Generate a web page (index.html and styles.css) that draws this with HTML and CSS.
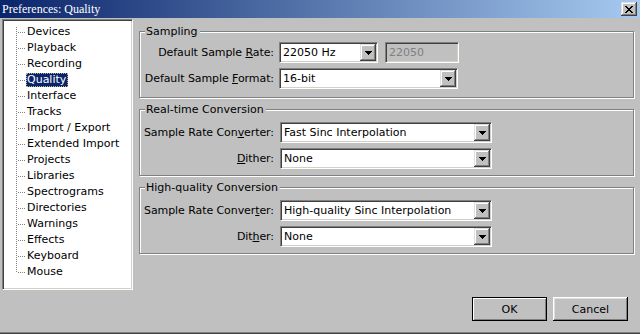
FILE: index.html
```html
<!DOCTYPE html>
<html>
<head>
<meta charset="utf-8">
<title>Preferences: Quality</title>
<link rel="stylesheet" href="styles.css">
</head>
<body>
<div class="window">
  <div class="titlebar">
    <span class="title">Preferences: Quality</span>
    <span class="close"><svg width="8" height="7" viewBox="0 0 8 7" shape-rendering="crispEdges"><path d="M0 0h2v1H0zM6 0h2v1H6zM1 1h2v1H1zM5 1h2v1H5zM2 2h4v1H2zM3 3h2v1H3zM2 4h4v1H2zM1 5h2v1H1zM5 5h2v1H5zM0 6h2v1H0zM6 6h2v1H6z" fill="#000"/></svg></span>
  </div>
  <div class="content">
    <div class="main">
      <div class="tree">
        <ul class="tree-list">
          <li>Devices</li>
          <li>Playback</li>
          <li>Recording</li>
          <li><span class="sel">Quality</span></li>
          <li>Interface</li>
          <li>Tracks</li>
          <li>Import / Export</li>
          <li>Extended Import</li>
          <li>Projects</li>
          <li>Libraries</li>
          <li>Spectrograms</li>
          <li>Directories</li>
          <li>Warnings</li>
          <li>Effects</li>
          <li>Keyboard</li>
          <li>Mouse</li>
        </ul>
      </div>
      <div class="panels">
        <div class="group g-sampling">
          <span class="legend">Sampling</span>
          <div class="row">
            <span class="label">Default Sample <u>R</u>ate:</span>
            <div class="combo w-rate"><span class="val">22050 Hz</span><span class="drop"><svg width="7" height="4" viewBox="0 0 7 4" shape-rendering="crispEdges"><path d="M0 0h7v1H0zM1 1h5v1H1zM2 2h3v1H2zM3 3h1v1H3z" fill="#000"/></svg></span></div>
            <div class="field disabled">22050</div>
          </div>
          <div class="row">
            <span class="label">Default Sample <u>F</u>ormat:</span>
            <div class="combo w-format"><span class="val">16-bit</span><span class="drop"><svg width="7" height="4" viewBox="0 0 7 4" shape-rendering="crispEdges"><path d="M0 0h7v1H0zM1 1h5v1H1zM2 2h3v1H2zM3 3h1v1H3z" fill="#000"/></svg></span></div>
          </div>
        </div>
        <div class="group g-conv">
          <span class="legend">Real-time Conversion</span>
          <div class="row">
            <span class="label">Sample Rate Con<u>v</u>erter:</span>
            <div class="combo w-conv"><span class="val">Fast Sinc Interpolation</span><span class="drop"><svg width="7" height="4" viewBox="0 0 7 4" shape-rendering="crispEdges"><path d="M0 0h7v1H0zM1 1h5v1H1zM2 2h3v1H2zM3 3h1v1H3z" fill="#000"/></svg></span></div>
          </div>
          <div class="row">
            <span class="label"><u>D</u>ither:</span>
            <div class="combo w-conv"><span class="val">None</span><span class="drop"><svg width="7" height="4" viewBox="0 0 7 4" shape-rendering="crispEdges"><path d="M0 0h7v1H0zM1 1h5v1H1zM2 2h3v1H2zM3 3h1v1H3z" fill="#000"/></svg></span></div>
          </div>
        </div>
        <div class="group g-conv">
          <span class="legend">High-quality Conversion</span>
          <div class="row">
            <span class="label">Sample Rate Conver<u>t</u>er:</span>
            <div class="combo w-conv"><span class="val">High-quality Sinc Interpolation</span><span class="drop"><svg width="7" height="4" viewBox="0 0 7 4" shape-rendering="crispEdges"><path d="M0 0h7v1H0zM1 1h5v1H1zM2 2h3v1H2zM3 3h1v1H3z" fill="#000"/></svg></span></div>
          </div>
          <div class="row">
            <span class="label">Dit<u>h</u>er:</span>
            <div class="combo w-conv"><span class="val">None</span><span class="drop"><svg width="7" height="4" viewBox="0 0 7 4" shape-rendering="crispEdges"><path d="M0 0h7v1H0zM1 1h5v1H1zM2 2h3v1H2zM3 3h1v1H3z" fill="#000"/></svg></span></div>
          </div>
        </div>
      </div>
    </div>
    <div class="buttons">
      <button class="btn btn-default">OK</button>
      <button class="btn">Cancel</button>
    </div>
  </div>
</div>
</body>
</html>
```
FILE: styles.css
```css
* { box-sizing: border-box; margin: 0; padding: 0; }
html, body { width: 640px; height: 334px; overflow: hidden; }
body {
  background: #c0c0c0;
  font-family: "DejaVu Sans", Tahoma, sans-serif;
  font-size: 11px;
  color: #000;
}
.window {
  width: 640px;
  height: 334px;
  display: flex;
  flex-direction: column;
  box-shadow: inset 0 -1px 0 #404040, inset 0 -2px 0 #808080;
}
.titlebar {
  height: 18px;
  display: flex;
  align-items: center;
  padding: 0 3px 0 2px;
  background: linear-gradient(to right, #0a246a, #a6caf0);
}
.title {
  flex: 1;
  color: #fff;
  font-family: "Liberation Serif", serif;
  font-size: 12px;
  white-space: nowrap;
}
.close {
  width: 16px;
  height: 14px;
  display: flex;
  align-items: center;
  justify-content: center;
  background: #c0c0c0;
  box-shadow: inset -1px -1px 0 #404040, inset 1px 1px 0 #dfdfdf, inset -2px -2px 0 #808080, inset 2px 2px 0 #fff;
}
.content {
  flex: 1;
  display: flex;
  flex-direction: column;
}
.main {
  display: flex;
  margin-top: 1px;
  padding-left: 2px;
  gap: 6px;
}
.tree {
  width: 131px;
  height: 271px;
  background: #fff;
  border: 1px solid;
  border-color: #808080 #fff #fff #808080;
  box-shadow: inset 1px 1px 0 #404040, inset -1px -1px 0 #d4d0c8;
  padding-top: 4px;
  padding-left: 2px;
}
.tree-list {
  list-style: none;
  position: relative;
}
.tree-list::before {
  content: "";
  position: absolute;
  left: 11px;
  top: 3px;
  bottom: 7px;
  width: 1px;
  background: repeating-linear-gradient(to bottom, #808080 0 1px, transparent 1px 2px);
}
.tree-list li {
  position: relative;
  height: 16px;
  line-height: 16px;
  padding-left: 22px;
  white-space: nowrap;
}
.tree-list li::before {
  content: "";
  position: absolute;
  left: 12px;
  top: 8px;
  width: 9px;
  height: 1px;
  background: repeating-linear-gradient(to right, transparent 0 1px, #808080 1px 2px);
}
.sel {
  display: inline-block;
  height: 14px;
  line-height: 13px;
  margin-left: -1px;
  padding: 0 2px 0 1px;
  background: #0a246a;
  color: #fff;
  outline: 1px dotted #b8b890;
  outline-offset: -1px;
  vertical-align: top;
  margin-top: 1px;
}
.panels {
  flex: 1;
  margin-top: 12px;
  margin-right: 6px;
  display: flex;
  flex-direction: column;
  gap: 11px;
}
.group {
  position: relative;
  height: 67px;
  border: 1px solid #808080;
  box-shadow: 1px 1px 0 #fff, inset 1px 1px 0 #fff;
  display: flex;
  flex-direction: column;
  gap: 5px;
}
.g-sampling { padding-top: 10px; }
.g-conv { padding-top: 12px; }
.legend {
  position: absolute;
  left: 5px;
  top: -7px;
  line-height: 13px;
  padding: 0 2px 0 1px;
  background: #c0c0c0;
}
.row {
  display: flex;
  align-items: center;
  height: 21px;
}
.label {
  width: 134px;
  text-align: right;
  margin-right: 5px;
  white-space: nowrap;
  letter-spacing: -0.08px;
}
.g-conv .label { margin-right: 6px; }
.combo, .field {
  height: 21px;
  display: flex;
  align-items: center;
  background: #fff;
  border: 1px solid;
  border-color: #808080 #fff #fff #808080;
  box-shadow: inset 1px 1px 0 #404040, inset -1px -1px 0 #d4d0c8;
  padding: 1px;
}
.w-rate { width: 99px; }
.w-format { width: 179px; }
.w-conv { width: 212px; }
.val {
  flex: 1;
  padding-left: 2px;
  white-space: nowrap;
  overflow: hidden;
}
.drop {
  width: 16px;
  height: 17px;
  display: flex;
  align-items: center;
  justify-content: center;
  background: #c0c0c0;
  box-shadow: inset -1px -1px 0 #404040, inset 1px 1px 0 #dfdfdf, inset -2px -2px 0 #808080, inset 2px 2px 0 #fff;
}
.field {
  width: 74px;
  margin-left: 7px;
  padding-left: 3px;
}
.field.disabled {
  background: #c0c0c0;
  color: #808080;
}
.buttons {
  display: flex;
  justify-content: flex-end;
  gap: 6px;
  margin-top: 7px;
  padding-right: 12px;
}
.btn {
  width: 75px;
  height: 24px;
  font-family: "DejaVu Sans", Tahoma, sans-serif;
  font-size: 11px;
  color: #000;
  background: #c0c0c0;
  border: none;
  box-shadow: inset -1px -1px 0 #000, inset 1px 1px 0 #fff, inset -2px -2px 0 #808080, inset 2px 2px 0 #dfdfdf;
}
.btn-default {
  border: 1px solid #000;
  box-shadow: inset 1px 1px 0 #fff, inset -1px -1px 0 #808080;
}
```
